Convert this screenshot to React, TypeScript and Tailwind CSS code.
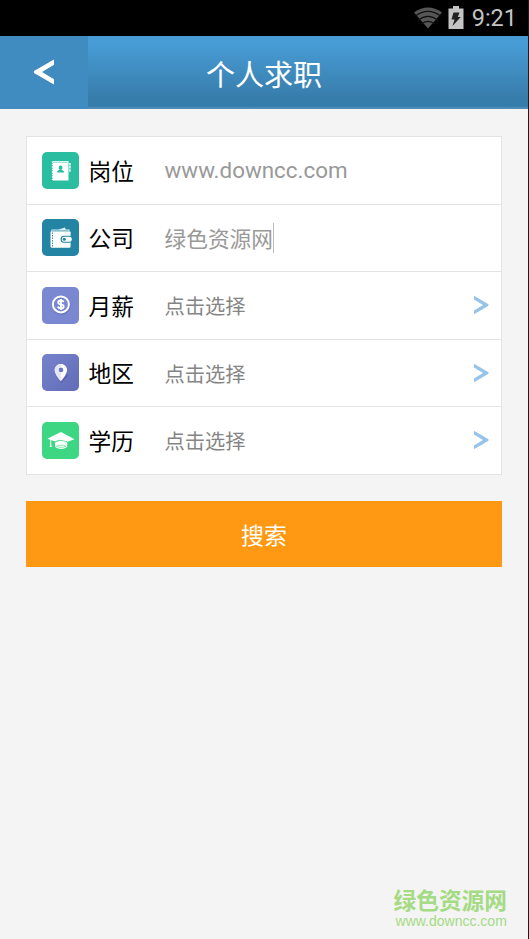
import type { ReactNode } from "react";

const JobIcon = () => (
  <svg viewBox="0 0 37 37" className="w-full h-full">
    <path
      d="M11 9h15.500v19.500H11.200l-1.700-1 1.500-1.200-1.500-1.300 1.500-1.200-1.500-1.300 1.500-1.200-1.500-1.300 1.500-1.200-1.500-1.300 1.500-1.200-1.500-1.300 1.500-1.200-1.500-1.300 1.500-1.200-1.500-1.300z"
      fill="#fff"
    />
    <path d="M11 10.200h14.500" stroke="#2abda0" strokeWidth="0.6" />
    <path d="M27.900 11v9" stroke="#d8f5ee" strokeWidth="1.800" strokeDasharray="2.500 0.600" />
    <ellipse cx="18.600" cy="15.700" rx="1.900" ry="2.200" fill="#2abda0" />
    <path d="M15 20.400c0-1.700 1.600-2.300 3.500-2.300s3.600.6 3.600 2.300z" fill="#2abda0" />
  </svg>
);

const WalletIcon = () => (
  <svg viewBox="0 0 37 37" className="w-full h-full">
    <path d="M9 11.500q0-1 1.500-1h6l6.500-2 .8 2h3.700v2H9z" fill="#dceef5" />
    <path d="M9.500 11.900h17" stroke="#2384a3" strokeWidth="0.7" />
    <path d="M8.500 12.500H28q.6 0 .6.700v14.200q0 1.300-1.300 1.300H9.700q-1.200-.2-1.200-1.200z" fill="#fff" />
    <path d="M10.500 13.500v14" stroke="#2384a3" strokeWidth="0.9" strokeDasharray="1.500 1" />
    <rect x="18.600" y="16.800" width="12" height="6.900" rx="3.300" fill="#2384a3" />
    <rect x="19.800" y="17.800" width="10" height="4.900" rx="2.200" fill="#fff" />
    <circle cx="22.300" cy="20.300" r="1.500" fill="#2384a3" />
  </svg>
);

const SalaryIcon = () => (
  <svg viewBox="0 0 37 37" className="w-full h-full">
    <circle cx="19.400" cy="18.600" r="8.400" fill="none" stroke="#5866ad" strokeOpacity="0.500" strokeWidth="2" />
    <circle cx="18.900" cy="17.400" r="8" fill="none" stroke="#fff" strokeWidth="2" />
    <path
      d="M21.700 15c-.6-1.100-1.700-1.500-2.900-1.500-1.500 0-2.600.7-2.600 1.900 0 2.900 5.500 1.100 5.500 4 0 1.300-1.200 2-2.800 2-1.500 0-2.600-.5-3.100-1.700M18.900 12v11"
      fill="none"
      stroke="#fff"
      strokeWidth="1.800"
    />
  </svg>
);

const AreaIcon = () => (
  <svg viewBox="0 0 37 37" className="w-full h-full">
    <path d="M13.500 20.500l6 7.500 5.500-8.500 1 2-6.400 7.500z" fill="#4752a0" fillOpacity="0.500" />
    <path
      d="M18.900 10c-3.400 0-6.200 2.700-6.200 6 0 4.500 6.200 11 6.200 11s6.200-6.500 6.200-11c0-3.300-2.800-6-6.200-6zm0 3.500a2.400 2.400 0 110 4.800 2.400 2.400 0 010-4.800z"
      fill="#fff"
      fillRule="evenodd"
    />
    <path d="M12.700 16c0 4.500 6.200 11 6.200 11v-8.700a2.400 2.400 0 010-4.800V10c-3.400 0-6.200 2.700-6.200 6z" fill="#e4e6f6" />
  </svg>
);

const DegreeIcon = () => (
  <svg viewBox="0 0 37 37" className="w-full h-full">
    <path d="M5.300 16.800L19 10l13.500 7.200-7 2.500c-3.600-1.900-9.700-2-13.200-.4z" fill="#fff" />
    <path d="M8.700 17v7.500" stroke="#fff" strokeWidth="0.900" />
    <path d="M8.700 20.500l-1 4.500h2z" fill="#fff" />
    <path d="M13 20.500c3.500-2.100 8.900-2 12.200 0v4c-1.600 3.300-10.600 3.300-12.200 0z" fill="#fff" />
    <path d="M14.300 24.300c2.500-1.700 7.200-1.700 9.600 0-2.400 1.400-7.100 1.400-9.600 0z" fill="none" stroke="#3dd682" strokeWidth="0.600" />
  </svg>
);

type RowProps = {
  icon: ReactNode;
  iconClass: string;
  label: string;
  children: ReactNode;
  arrow?: boolean;
};

const Row = ({ icon, iconClass, label, children, arrow }: RowProps) => (
  <div className="flex h-[67.5px] items-center border-b-[1.5px] border-[#e4e4e4] pl-[15px] pr-[12px]">
    <div className={`h-[37px] w-[37px] shrink-0 overflow-hidden rounded-[5px] ${iconClass}`}>{icon}</div>
    <span className="ml-[9.5px] w-[76px] shrink-0 pt-[5.5px] text-[22.7px] leading-none text-black">{label}</span>
    <div className="flex flex-1 items-center">{children}</div>
    {arrow && (
      <svg width="16" height="20" viewBox="0 0 16 20">
        <path d="M1 .800L15.500 9.200v1.600L1 19.200v-3.600L10 10 1 4.400z" fill="#97c3e8" />
      </svg>
    )}
  </div>
);

const Choose = () => <span className="pt-[4px] text-[20.3px] leading-none text-[#858585]">点击选择</span>;

const StatusBar = () => (
  <div className="flex h-9 items-center bg-black pr-[11px]">
    <svg className="ml-auto" width="28" height="22" viewBox="0 0 28 22">
      <path d="M0 5.500Q14-4.500 28 5.500L14 21.500z" fill="#565656" />
      <path
        d="M1 9.300Q14-.5 27 9.300M4 13.200Q14 5.500 24 13.200M7 17.100Q14 11.500 21 17.100"
        fill="none"
        stroke="#111"
        strokeWidth="1.200"
      />
    </svg>
    <svg className="ml-[6px]" width="16" height="24" viewBox="0 0 16 24">
      <path d="M5 0h6v2.500h4.500V23H.5V2.500H5z" fill="#c4c4c4" />
      <path d="M5.500 6.500h6L9.800 11h3L4.500 20l2-6.500H3.500z" fill="#222" />
    </svg>
    <span className="ml-[8px] pt-[2px] text-[23.5px] leading-none text-[#c4c4c4]">9:21</span>
  </div>
);

export default function App() {
  return (
    <div className="relative flex h-[939px] w-[529px] flex-col overflow-hidden border-r border-[#1c1c1c] bg-[#f4f4f4] font-['Roboto','Noto_Sans_CJK_SC',sans-serif]">
      <StatusBar />

      <header className="flex h-[73px] shrink-0 bg-linear-to-b from-[#489cd6] from-10% to-[#377dab] to-85%">
        <button className="flex w-[88px] items-center justify-center bg-[#408bbf]">
          <svg className="mb-[2px]" width="22" height="26" viewBox="0 0 22 26">
            <path d="M21 .500v5.300L9 13l12 7.200v5.300L1 14v-2z" fill="#fff" />
          </svg>
        </button>
        <h1 className="flex flex-1 items-center border-b-2 border-[#4b8db8] pl-[118px] pt-[10px] text-[29px] leading-none text-white">
          个人求职
        </h1>
      </header>

      <main className="px-[26px] pt-[27px]">
        <div className="border-l-[1.5px] border-r-[1.5px] border-t-[1.5px] border-[#e4e4e4] bg-white">
          <Row icon={<JobIcon />} iconClass="bg-[#2abda0]" label="岗位">
            <span className="text-[22.4px] leading-none text-[#999]">www.downcc.com</span>
          </Row>
          <Row icon={<WalletIcon />} iconClass="bg-[#2384a3]" label="公司">
            <span className="pt-[4px] text-[21.7px] leading-none text-[#999]">绿色资源网</span>
            <span className="h-[30px] w-px bg-[#bbb]" />
          </Row>
          <Row icon={<SalaryIcon />} iconClass="bg-[#7a88d2]" label="月薪" arrow>
            <Choose />
          </Row>
          <Row icon={<AreaIcon />} iconClass="bg-linear-to-br from-[#7683cb] to-[#626cb8]" label="地区" arrow>
            <Choose />
          </Row>
          <Row icon={<DegreeIcon />} iconClass="bg-[#3dd682]" label="学历" arrow>
            <Choose />
          </Row>
        </div>

        <button className="mt-[26.5px] flex h-[66px] w-full items-center justify-center bg-[#ff9913] pt-[5px] text-[23px] leading-none text-white">
          搜索
        </button>
      </main>

      <div className="mt-auto self-end pb-[10px] pr-[21px] text-[#a5db84]">
        <div className="text-[22.7px] font-bold leading-[24px]">绿色资源网</div>
        <div className="pl-[2px] font-['Liberation_Sans',sans-serif] text-[14px] leading-[15px]">www.downcc.com</div>
      </div>
    </div>
  );
}
